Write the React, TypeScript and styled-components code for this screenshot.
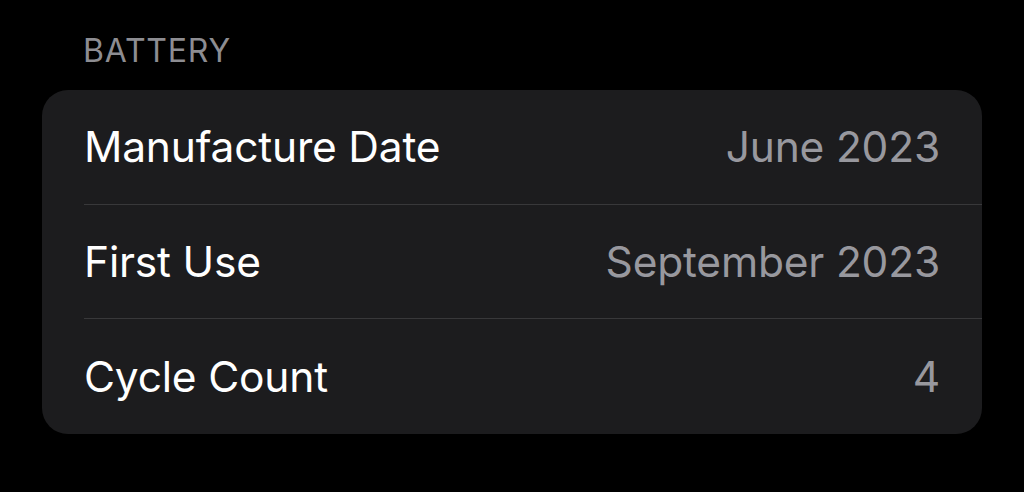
import React from "react";
import styled, { createGlobalStyle } from "styled-components";

const Global = createGlobalStyle`
  html, body { margin: 0; padding: 0; background: #000; }
  body { font-family: Inter, "Noto Sans", sans-serif; -webkit-font-smoothing: antialiased; }
`;

const Page = styled.div`
  width: 1024px;
  height: 492px;
  background: #000;
  padding: 35px 42px 0 42px;
  box-sizing: border-box;
`;

const SectionHeader = styled.div`
  color: #8d8d92;
  font-size: 32px;
  letter-spacing: 0.8px;
  line-height: 32px;
  padding-left: 41px;
  margin-bottom: 23px;
`;

const Card = styled.div`
  background: #1c1c1e;
  border-radius: 26px;
  padding-left: 42px;
`;

const Row = styled.div<{ $last?: boolean }>`
  display: flex;
  align-items: center;
  justify-content: space-between;
  height: 114.5px;
  box-sizing: border-box;
  padding-right: 42px;
  border-bottom: ${(p) => (p.$last ? "none" : "1px solid #38383a")};
`;

const Label = styled.span`
  color: #ffffff;
  font-size: 42.5px;
  letter-spacing: -0.2px;
`;

const Value = styled.span`
  color: #98989e;
  font-size: 42.5px;
  letter-spacing: -0.2px;
`;

const rows = [
  ["Manufacture Date", "June 2023"],
  ["First Use", "September 2023"],
  ["Cycle Count", "4"],
];

export default function App() {
  return (
    <>
      <Global />
      <Page>
        <SectionHeader>BATTERY</SectionHeader>
        <Card>
          {rows.map(([l, v], i) => (
            <Row key={l} $last={i === rows.length - 1}>
              <Label>{l}</Label>
              <Value>{v}</Value>
            </Row>
          ))}
        </Card>
      </Page>
    </>
  );
}
